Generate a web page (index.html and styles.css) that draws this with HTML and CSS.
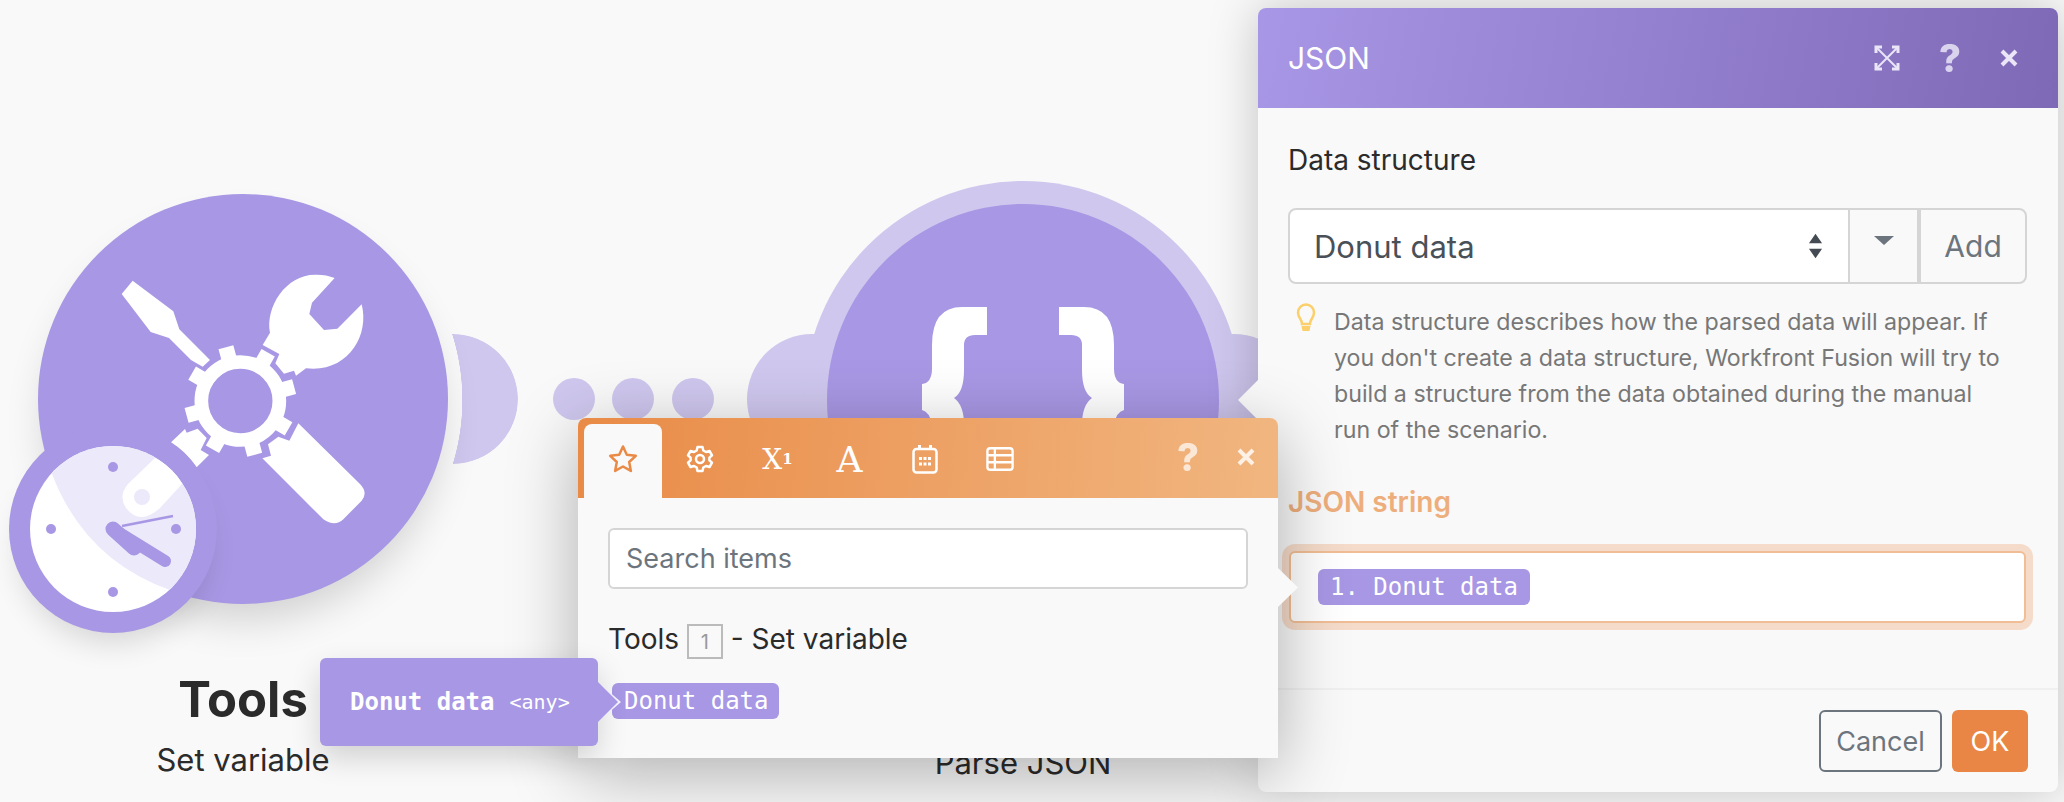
FILE: index.html
```html
<!DOCTYPE html>
<html lang="en">
<head>
    <meta charset="UTF-8">
    <title>Parse JSON</title>
    <link rel="stylesheet" href="styles.css">
</head>
<body>

    <main class="canvas">
        <div class="dot dot-1"></div>
        <div class="dot dot-2"></div>
        <div class="dot dot-3"></div>

        <!-- Tools module -->
        <section class="module module-tools">
            <div class="tools-lobe"></div>
            <div class="tools-circle">
                <svg class="tools-icon" viewBox="0 0 900 900">
                    <path d="M98 92 L65 132 L152 246 L207 264 L273 330 L308 350 L330 330 L238 238 L220 184 Z"/>
                    <path d="M488 285 L510 248 C495 170 560 70 650 74 Q680 74 704 84 L636 158 L628 192 L672 240 L712 236 L785 163 C810 260 740 370 618 355 L588 377 L582 362 L552 371 L526 340 L538 312 Z"/>
                    <path d="M595 520 L780 702 Q805 728 785 752 L730 808 Q705 832 670 808 L487 625 L513 617 L504 583 L535 560 L568 572 Z"/>
                    <path d="M213 577 L255 537 L260 548 L293 536 L320 564 L302 600 L327 615 L290 652 Q258 605 213 577 Z"/>
                    <g transform="translate(421 453)">
                        <circle r="117" fill="none" stroke="#fff" stroke-width="41"/>
                        <rect x="-23" y="-167" width="46" height="40" transform="rotate(-15)"/>
                        <rect x="-23" y="-167" width="46" height="40" transform="rotate(30)"/>
                        <rect x="-23" y="-167" width="46" height="40" transform="rotate(75)"/>
                        <rect x="-23" y="-167" width="46" height="40" transform="rotate(120)"/>
                        <rect x="-23" y="-167" width="46" height="40" transform="rotate(165)"/>
                        <rect x="-23" y="-167" width="46" height="40" transform="rotate(210)"/>
                        <rect x="-23" y="-167" width="46" height="40" transform="rotate(255)"/>
                        <rect x="-23" y="-167" width="46" height="40" transform="rotate(300)"/>
                    </g>
                </svg>
            </div>
            <div class="clock">
                <svg class="clock-face" viewBox="30 446 166 166">
                    <defs>
                        <clipPath id="faceClip"><circle cx="113" cy="529" r="83"/></clipPath>
                    </defs>
                    <g clip-path="url(#faceClip)">
                        <rect x="30" y="446" width="166" height="166" fill="#fff"/>
                        <path d="M52 474 Q85 560 170 590 L210 590 L210 430 L40 430 Z" fill="#ece9fa"/>
                        <path d="M155 458 L128 484 Q118 496 126 508 Q140 526 160 508 L182 484 Q175 468 155 458 Z" fill="#fff"/>
                        <circle cx="142" cy="497" r="8" fill="#ece9fa"/>
                    </g>
                    <circle cx="113" cy="467" r="5" fill="#a897e4"/>
                    <circle cx="51" cy="529" r="5" fill="#a897e4"/>
                    <circle cx="176" cy="529" r="5" fill="#a897e4"/>
                    <circle cx="113" cy="592" r="5" fill="#a897e4"/>
                    <path d="M122 526 L173 516" stroke="#a897e4" stroke-width="2.5" fill="none"/>
                    <path d="M113 529 L134 548" stroke="#a897e4" stroke-width="15" stroke-linecap="round" fill="none"/>
                    <path d="M118 532 L165 561" stroke="#a897e4" stroke-width="12" stroke-linecap="round" fill="none"/>
                </svg>
            </div>
            <div class="module-label">
                <div class="module-name">Tools</div>
                <div class="module-sub">Set variable</div>
            </div>
        </section>

        <!-- JSON module -->
        <section class="module module-json">
            <div class="json-lobe json-lobe-left"></div>
            <div class="json-lobe json-lobe-right"></div>
            <div class="json-ring"></div>
            <div class="json-circle">
                <svg class="json-icon" viewBox="827 204 392 392">
                    <path d="M987 307 H962 Q932 307 932 345 V368 Q932 383 922 384 V410 Q930 412 932 425 V450 H964 V425 Q964 405 954 398 Q964 392 964 370 V345 Q964 335 975 335 H987 Z"/>
                    <path d="M1059 307 H1084 Q1114 307 1114 345 V368 Q1114 383 1124 384 V410 Q1116 412 1114 425 V450 H1082 V425 Q1082 405 1092 398 Q1082 392 1082 370 V345 Q1082 335 1071 335 H1059 Z"/>
                </svg>
            </div>
            <div class="module-label module-label-json">
                <div class="module-sub">Parse JSON</div>
            </div>
        </section>
    </main>

    <!-- settings panel -->
    <aside class="panel">
        <header class="panel-header">
            <h1 class="panel-title">JSON</h1>
            <div class="panel-actions">
                <svg class="icon-expand" viewBox="0 0 26 26">
                    <path d="M8 2 H2 V8 M18 2 H24 V8 M8 24 H2 V18 M18 24 H24 V18"/>
                    <path class="icon-expand-cross" d="M3 3 L23 23 M23 3 L3 23"/>
                </svg>
                <span class="icon-help">?</span>
                <svg class="icon-close" viewBox="0 0 18 18"><path d="M2 2 L16 16 M16 2 L2 16"/></svg>
            </div>
        </header>

        <div class="panel-body">
            <label class="field-label">Data structure</label>
            <div class="select-row">
                <div class="select-box">
                    <span>Donut data</span>
                    <svg class="select-arrows" viewBox="0 0 16 32">
                        <path d="M8 3 L15 13 H1 Z M8 29 L1 19 H15 Z"/>
                    </svg>
                </div>
                <div class="select-toggle"><span class="caret"></span></div>
                <button class="btn-add">Add</button>
            </div>

            <div class="hint">
                <svg class="hint-bulb" viewBox="0 0 20 30">
                    <path d="M6 21 C6 16 2 15 2 9.500 A8 8 0 0 1 18 9.500 C18 15 14 16 14 21 Z" fill="none" stroke="#fbd06a" stroke-width="2.500"/>
                    <path d="M5.500 23 H14.500 L13.500 28 H6.500 Z" fill="#fbd06a"/>
                </svg>
                <p>Data structure describes how the parsed data will appear. If you don't create a data structure, Workfront Fusion will try to build a structure from the data obtained during the manual run of the scenario.</p>
            </div>

            <label class="field-label field-label-active">JSON string</label>
            <div class="json-input">
                <span class="chip chip-input">1. Donut data</span>
            </div>
        </div>

        <footer class="panel-footer">
            <button class="btn-cancel">Cancel</button>
            <button class="btn-ok">OK</button>
        </footer>
    </aside>

    <!-- mapping popup -->
    <section class="popup">
        <div class="popup-tabs">
            <div class="tab tab-active">
                <svg class="tab-star" viewBox="0 0 30 30">
                    <path d="M15 2.500 L18.800 10.700 L27.800 11.800 L21.200 18 L22.900 26.900 L15 22.500 L7.100 26.900 L8.800 18 L2.200 11.800 L11.200 10.700 Z"/>
                </svg>
            </div>
            <div class="tab">
                <svg class="tab-icon" viewBox="0 0 28 28">
                    <path d="M11.500 2 H16.500 L17.300 5.500 L20 7 L23.500 6 L26 10.300 L23.400 12.700 V15.300 L26 17.700 L23.500 22 L20 21 L17.300 22.500 L16.500 26 H11.500 L10.700 22.500 L8 21 L4.500 22 L2 17.700 L4.600 15.300 V12.700 L2 10.300 L4.500 6 L8 7 L10.700 5.500 Z"/>
                    <circle cx="14" cy="14" r="4"/>
                </svg>
            </div>
            <div class="tab tab-text tab-math">X<sup>1</sup></div>
            <div class="tab tab-text tab-letter">A</div>
            <div class="tab">
                <svg class="tab-icon" viewBox="0 0 26 30">
                    <rect x="1.500" y="5" width="23" height="23.500" rx="3"/>
                    <path d="M7.500 1 V5 M18.500 1 V5" stroke-width="3"/>
                    <path class="tab-fill" d="M7 13 h3 v3 h-3 Z M11.500 13 h3 v3 h-3 Z M16 13 h3 v3 h-3 Z M7 18.500 h3 v3 h-3 Z M11.500 18.500 h3 v3 h-3 Z M16 18.500 h3 v3 h-3 Z"/>
                </svg>
            </div>
            <div class="tab">
                <svg class="tab-icon" viewBox="0 0 30 26">
                    <rect x="1.500" y="1.500" width="27" height="23" rx="3"/>
                    <path d="M9.500 1.500 V24.500 M1.500 9 H28.500 M1.500 16.500 H28.500"/>
                </svg>
            </div>
            <div class="popup-actions">
                <span class="icon-help">?</span>
                <svg class="icon-close" viewBox="0 0 18 18"><path d="M2 2 L16 16 M16 2 L2 16"/></svg>
            </div>
        </div>
        <div class="popup-body">
            <input class="search" type="text" placeholder="Search items">
            <div class="source-title">Tools <span class="source-num">1</span> - Set variable</div>
            <span class="chip chip-source">Donut data</span>
        </div>
    </section>

    <div class="tooltip"><strong>Donut data</strong><span>&lt;any&gt;</span></div>

</body>
</html>
```

FILE: styles.css
```css
* {
    box-sizing: border-box;
}

html {
    overflow: hidden;
}

body {
    font-family: 'Inter', sans-serif;
    margin: 0;
    width: 2064px;
    height: 802px;
    overflow: hidden;
    position: relative;
    background-color: #f9f9f9;
    color: #2b2b2b;
}

/* scenario canvas */
.canvas {
    position: absolute;
    inset: 0;
    overflow: hidden;
}

.dot {
    position: absolute;
    top: 378px;
    width: 42px;
    height: 42px;
    border-radius: 50%;
    background-color: #cfc7ee;
}

.dot-1 { left: 553px; }
.dot-2 { left: 612px; }
.dot-3 { left: 672px; }

.module {
    position: absolute;
}

.module-tools {
    left: 38px;
    top: 194px;
    width: 410px;
}

.module-json {
    left: 827px;
    top: 204px;
    width: 392px;
}

.tools-circle {
    position: relative;
    width: 410px;
    height: 410px;
    border-radius: 50%;
    background-color: #a897e4;
    box-shadow: 0 24px 40px -8px rgba(0, 0, 0, 0.16);
}

.tools-icon {
    position: absolute;
    left: 62px;
    top: 56px;
    width: 300px;
    height: 300px;
    fill: #fff;
}

.tools-lobe {
    position: absolute;
    left: 350px;
    top: 140px;
    width: 130px;
    height: 130px;
    border-radius: 50%;
    background-color: #cfc7ee;
    -webkit-mask-image: radial-gradient(circle at -145px 66px, transparent 219px, #000 219.500px);
    mask-image: radial-gradient(circle at -145px 66px, transparent 219px, #000 219.500px);
}

.clock {
    position: absolute;
    left: -29px;
    top: 231px;
    width: 208px;
    height: 208px;
    padding: 21px;
    border-radius: 50%;
    background-color: #a897e4;
    box-shadow: 0 20px 30px -10px rgba(0, 0, 0, 0.14);
}

.clock-face {
    display: block;
    width: 166px;
    height: 166px;
}

.module-label {
    text-align: center;
    margin-top: 67px;
}

.module-label-json {
    margin-top: 149px;
}

.module-name {
    font-size: 49px;
    line-height: 58px;
    font-weight: 700;
}

.module-sub {
    font-size: 31px;
    line-height: 36px;
    margin-top: 13px;
}

.module-label-json .module-sub {
    margin-top: 0;
}

.json-circle {
    position: relative;
    width: 392px;
    height: 392px;
    border-radius: 50%;
    background-color: #a897e4;
}

.json-ring {
    position: absolute;
    left: -23px;
    top: -23px;
    width: 438px;
    height: 438px;
    border-radius: 50%;
    background-color: #cfc7ee;
}

.json-icon {
    width: 392px;
    height: 392px;
    fill: #fff;
}

.json-lobe {
    position: absolute;
    top: 130px;
    width: 130px;
    height: 130px;
    border-radius: 50%;
    background-color: #cfc7ee;
}

.json-lobe-left { left: -80px; }
.json-lobe-right { left: 342px; }

/* settings panel */
.panel {
    position: absolute;
    left: 1258px;
    top: 8px;
    width: 800px;
    height: 784px;
    display: flex;
    flex-direction: column;
    background-color: #f9f9f9;
    border-radius: 8px;
    box-shadow: 0 0 50px rgba(0, 0, 0, 0.22);
}

.panel::before {
    content: "";
    position: absolute;
    left: -20px;
    top: 372px;
    width: 20px;
    height: 40px;
    background-color: #f9f9f9;
    clip-path: polygon(100% 0, 0 50%, 100% 100%);
}

.panel-header {
    height: 100px;
    padding: 0 31px 0 30px;
    display: flex;
    align-items: center;
    border-radius: 8px 8px 0 0;
    background: linear-gradient(100deg, #a897e6, #7e69b6);
}

.panel-title {
    margin: 0;
    font-size: 30px;
    font-weight: 400;
    color: #fff;
}

.panel-actions {
    margin-left: auto;
    display: flex;
    align-items: center;
    gap: 39px;
    padding-right: 9px;
    color: #eae5f7;
}

.icon-help {
    font-size: 38px;
    line-height: 38px;
    font-weight: 800;
    opacity: 0.85;
}

.icon-close {
    width: 18px;
    height: 18px;
    fill: none;
    stroke: currentColor;
    stroke-width: 4;
}

.icon-expand {
    width: 26px;
    height: 26px;
    fill: none;
    stroke: currentColor;
    stroke-width: 3;
}

.icon-expand-cross {
    stroke-width: 2;
}

.panel-body {
    flex: 1;
    padding: 37px 31px 0 30px;
}

.field-label {
    display: block;
    font-size: 28px;
    line-height: 30px;
}

.field-label-active {
    margin-top: 39px;
    font-weight: 600;
    color: #eeae7c;
}

.select-row {
    display: flex;
    height: 76px;
    margin-top: 33px;
}

.select-box {
    width: 563px;
    padding: 0 25px 0 24px;
    display: flex;
    align-items: center;
    justify-content: space-between;
    font-size: 31px;
    color: #495057;
    background-color: #fff;
    border: 2px solid #d5d5d5;
    border-radius: 8px 0 0 8px;
}

.select-arrows {
    width: 15px;
    height: 30px;
    fill: #454b52;
}

.select-toggle {
    width: 69px;
    display: flex;
    align-items: center;
    justify-content: center;
    border: 2px solid #d5d5d5;
    border-left: none;
}

.caret {
    margin-top: -12px;
    border-style: solid;
    border-width: 9px 10px 0;
    border-color: #6c757d transparent transparent;
}

.btn-add {
    width: 108px;
    font-family: inherit;
    font-size: 30px;
    color: #6c757d;
    background-color: #f9f9f9;
    border: 2px solid #d5d5d5;
    border-radius: 0 8px 8px 0;
}

.hint {
    position: relative;
    margin-top: 20px;
    padding-left: 46px;
}

.hint-bulb {
    position: absolute;
    left: 8px;
    top: -1px;
    width: 20px;
    height: 30px;
}

.hint p {
    max-width: 672px;
    margin: 0;
    font-size: 23.200px;
    line-height: 36px;
    color: #777;
}

.json-input {
    height: 72px;
    margin: 34px 1px 0;
    padding-left: 27px;
    display: flex;
    align-items: center;
    background-color: #fff;
    border: 2px solid #f1bd94;
    border-radius: 6px;
    box-shadow: 0 0 0 7px #f5dbc9;
}

.chip {
    display: inline-block;
    height: 36px;
    padding: 0 12px;
    font-family: 'DejaVu Sans Mono', monospace;
    font-size: 24px;
    line-height: 36px;
    color: #fff;
    white-space: pre;
    background-color: #a897e4;
    border-radius: 6px;
}

.panel-footer {
    height: 104px;
    padding: 20px 30px 0 0;
    display: flex;
    justify-content: flex-end;
    gap: 10px;
    border-top: 2px solid #f0f0f0;
}

.panel-footer button {
    height: 62px;
    font-family: inherit;
    font-size: 27px;
    border-radius: 6px;
}

.btn-cancel {
    width: 123px;
    color: #6c757d;
    background-color: #f9f9f9;
    border: 2px solid #6c757d;
}

.btn-ok {
    width: 76px;
    color: #fff;
    background-color: #e98645;
    border: none;
}

/* mapping popup */
.popup {
    position: absolute;
    left: 578px;
    top: 418px;
    width: 700px;
    height: 340px;
    background-color: #f9f9f9;
    border-radius: 8px 8px 0 0;
    box-shadow: 0 16px 70px rgba(0, 0, 0, 0.3);
}

.popup::after {
    content: "";
    position: absolute;
    left: 700px;
    top: 150px;
    width: 20px;
    height: 39px;
    background-color: #f9f9f9;
    clip-path: polygon(0 0, 100% 50%, 0 100%);
}

.popup-tabs {
    height: 80px;
    padding: 6px 0 0 6px;
    display: flex;
    border-radius: 8px 8px 0 0;
    background: linear-gradient(95deg, #e98b47, #f1b680);
}

.tab {
    width: 75px;
    padding-bottom: 4px;
    display: flex;
    align-items: center;
    justify-content: center;
    color: #fff;
}

.tab-active {
    width: 78px;
    background-color: #f9f9f9;
    border-radius: 8px 8px 0 0;
}

.tab-star {
    width: 30px;
    height: 30px;
    fill: none;
    stroke: #e98b47;
    stroke-width: 2.500;
    stroke-linejoin: round;
}

.tab-icon {
    width: 28px;
    height: 30px;
    fill: none;
    stroke: #fff;
    stroke-width: 2.500;
    stroke-linejoin: round;
}

.tab-fill {
    fill: #fff;
    stroke: none;
}

.tab-text {
    font-family: 'DejaVu Serif', serif;
}

.tab-math {
    padding-left: 6px;
    font-size: 28px;
}

.tab-math sup {
    font-size: 15px;
    font-weight: 700;
    line-height: 0;
    vertical-align: 16px;
}

.tab-letter {
    font-size: 36px;
}

.popup-actions {
    margin-left: auto;
    padding: 0 23px 8px 0;
    display: flex;
    align-items: center;
    gap: 38px;
    color: #fdf1e6;
}

.popup-body {
    padding: 30px 30px 0;
}

.search {
    display: block;
    width: 100%;
    height: 61px;
    padding: 0 16px;
    font-family: inherit;
    font-size: 27px;
    background-color: #fff;
    border: 2px solid #d5d5d5;
    border-radius: 6px;
}

.search::placeholder {
    color: #6c757d;
}

.source-title {
    margin-top: 33px;
    font-size: 28px;
    line-height: 35px;
}

.source-num {
    display: inline-block;
    width: 36px;
    height: 35px;
    font-size: 20px;
    line-height: 33px;
    text-align: center;
    color: #999;
    border: 2px solid #bbb;
}

.chip-source {
    display: block;
    width: 167px;
    margin: 24px 0 0 4px;
    padding: 0 12px 0 12px;
}

/* tooltip over the popup */
.tooltip {
    position: absolute;
    left: 320px;
    top: 658px;
    width: 278px;
    height: 88px;
    padding-left: 30px;
    display: flex;
    align-items: center;
    gap: 15px;
    font-family: 'DejaVu Sans Mono', monospace;
    color: #fff;
    background-color: #a897e4;
    border-radius: 6px;
    box-shadow: 0 12px 30px rgba(0, 0, 0, 0.16);
}

.tooltip strong {
    font-size: 24px;
}

.tooltip span {
    font-size: 20px;
}

.tooltip::before,
.tooltip::after {
    content: "";
    position: absolute;
    top: 24px;
    height: 40px;
    clip-path: polygon(0 0, 100% 50%, 0 100%);
}

.tooltip::before {
    left: 278px;
    width: 23px;
    background-color: #f2f0fb;
}

.tooltip::after {
    left: 278px;
    width: 20px;
    background-color: #a897e4;
}
```
